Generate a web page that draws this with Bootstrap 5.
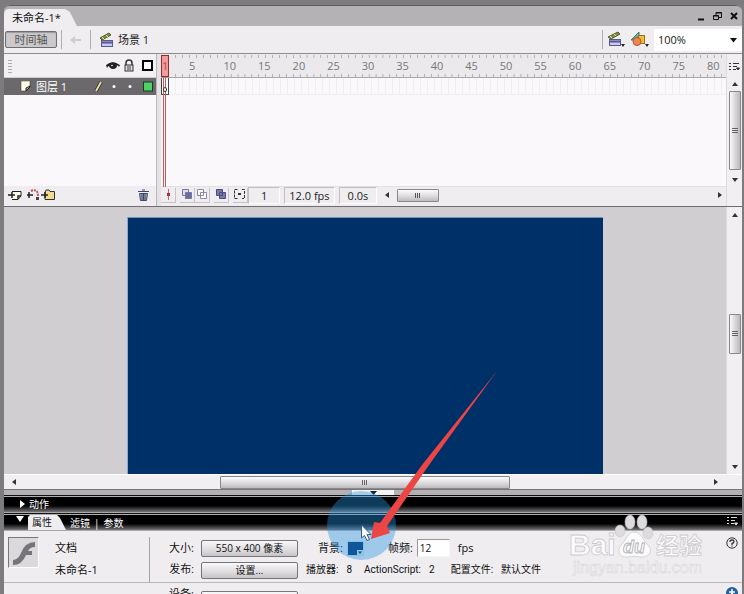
<!DOCTYPE html>
<html lang="zh-CN">
<head>
<meta charset="utf-8">
<meta name="viewport" content="width=device-width, initial-scale=1">
<title>未命名-1</title>
<link href="https://cdn.jsdelivr.net/npm/bootstrap@5.3.0/dist/css/bootstrap.min.css" rel="stylesheet">
<style>
  body { font: 11px/14px "Open Sans", "Noto Sans CJK SC", sans-serif; color: #222; background: #7d7b7e; }
  button, input, select { font: inherit; color: inherit; }
  svg { display: block; flex: none; }
  .shell { padding: 5px 2px 0 4px; }
  .doc { background: #efedf0; border-radius: 6px 6px 0 0; border-bottom: 1px solid #77757a; min-height: 0; }
  .titlebar { height: 21px; background: #b4b2b5; border-top: 1px solid #5f5d60; border-radius: 6px 6px 0 0; }
  .doc-tab { height: 17px; padding: 0 16px 0 8px; background: #efedf0; color: #111; border-radius: 5px 0 0 0; clip-path: polygon(0 0, calc(100% - 12px) 0, calc(100% - 7px) 3px, 100% 100%, 0 100%); }
  .plain { border: 0; padding: 0; background: none; }
  .toolbar { height: 28px; background: #efedf0; border-bottom: 1px solid #8e8c8f; padding-left: 1px; }
  .tl-toggle { width: 52px; height: 17px; border: 1px solid #6f6d70; border-radius: 2px; background: #cbc9cc; color: #555; line-height: 14px; box-shadow: inset 0 1px 1px #9a989b; }
  .vline { width: 1px; align-self: stretch; background: #b1afb2; }
  .zoom-box { width: 88px; height: 22px; border: 0; background: #fff; padding: 0 4px; font-size: 11px; appearance: none; }
  .zoom-wrap svg { position: absolute; right: 5px; top: 9px; pointer-events: none; }
  .timeline { height: 153px; background: #faf8fb; border-bottom: 1px solid #6f6d70; }
  .layers { width: 153px; }
  .layers-head { height: 24px; background: #f2f0f3; border-bottom: 1px solid #cfcdd0; }
  .grip { width: 4px; height: 14px; background: radial-gradient(#999 34%, transparent 40%) 0 0 / 2px 3px; }
  .layer-row { height: 17px; background: #6b696c; color: #fff; }
  .tl-foot { height: 20px; padding-bottom: 3px; background: #efedf0; }
  .frames { border-left: 4px solid #e4e2e5; box-shadow: -1px 0 #b9b7ba; }
  .ruler { height: 24px; background: #ebe9ec; border-bottom: 1px solid #aaa8ab; color: #777; font-size: 11px; line-height: 24px; }
  .ruler-start { width: 28px; }
  .ruler-end { width: 19px; }
  .ticks { background: linear-gradient(90deg, #b4b2b5 1px, transparent 1px) 0 1px / 20% 3px repeat-x, linear-gradient(90deg, #b4b2b5 1px, transparent 1px) 0 100% / 20% 3px repeat-x; }
  .ruler-start.ticks, .ruler-end.ticks { background-size: 7px 3px; }
  .cells { height: 17px; border-bottom: 1px solid #efedf0; background: repeating-linear-gradient(90deg, #f0eef1 0 1px, transparent 1px 7px); }
  .playhead { position: absolute; left: 0; top: 1px; width: 8px; height: 22px; background: #f49a98; border: 1px solid #8c2f30; color: #b05050; line-height: 20px; text-align: center; z-index: 2; }
  .playline { position: absolute; left: 2px; top: 23px; width: 3px; height: 110px; border: solid #c85a5c; border-width: 0 1px; z-index: 1; }
  .keyframe { width: 8px; height: 17px; border: 1px solid #444; border-top: 0; background: #fff; }
  .keyframe i { width: 4px; height: 5px; border: 1px solid #333; border-radius: 50%; margin: 9px 0 0 1px; background: #fff; z-index: 2; }
  .vscroll { width: 16px; background: #f1eff2; border-left: 1px solid #dddbde; }
  .vthumb { width: 12px; border: 1px solid #89878a; border-radius: 1px; background: linear-gradient(90deg, #fafafa, #d6d4d7 55%, #bcbabd); }
  .hthumb { border: 1px solid #89878a; border-radius: 1px; background: linear-gradient(#fbfbfb, #dddbde 55%, #bdbbbe); }
  .foot-btn { width: 15px; height: 15px; border: 0; border-right: 1px solid #c5c3c6; border-bottom: 1px solid #c5c3c6; padding: 0; background: none; }
  .readout { height: 17px; border: 1px solid; border-color: #c1bfc2 #fff #fff #c1bfc2; text-align: center; line-height: 16px; }
  .stage-area { min-height: 0; background: #d0ced1; }
  .canvas { margin: 10px 123px 0 123px; background: #003068; border-top: 1px solid #6f93b8; border-left: 1px solid #8aa9c8; }
  .hscroll { height: 15px; background: #f1eff2; border-top: 1px solid #fff; }
  .stage-thumb { margin-left: 204px; width: 290px; height: 13px; }
  .splitter { height: 5px; background: #b3b1b4; }
  .collapse-tab { width: 42px; height: 5px; background: #f4f4f5; }
  .bar { height: 18px; color: #fff; border-top: 1px solid #111; border-bottom: 1px solid #aaa8ab; background: linear-gradient(#b0aeb1 0 1px, #000 1px 60%, #29282a 75%, #77757a); }
  .bar a { color: inherit; text-decoration: none; }
  .prop-tabs { font-size: 10px; }
  .prop-tab { height: 15px; padding: 0 14px 0 4px; background: #efedf0; clip-path: polygon(0 2px, 2px 0, calc(100% - 9px) 0, calc(100% - 6px) 3px, 100% 100%, 0 100%); }
  .bar a.prop-tab { color: #111; }
  .props { height: 63px; background: #efedf0; color: #111; }
  .props-main { padding-top: 6px; }
  .flash-mark { width: 31px; height: 31px; border: 1px solid; border-color: #777 #fff #fff #777; background: #dbd9dc; }
  .doc-info { width: 146px; height: 45px; border-right: 1px solid #a5a3a6; padding-left: 4px; }
  .prop-row { height: 22px; }
  .compact { font-size: 10px; font-family: Roboto, "Noto Sans CJK SC", sans-serif; }
  .prop-key { width: 47px; padding-right: 3px; text-align: right; font-size: 11px; }
  .prop-btn { width: 97px; height: 17px; border: 1px solid #77757a; border-radius: 2px; padding: 0; line-height: 15px; background: linear-gradient(#f9f8fa, #dedcdf 60%, #c6c4c7); }
  .narrow { font-size: 10px; }
  .swatch { width: 17px; height: 15px; border: 1px solid #c9dced; padding: 0; background: #003068; }
  .fps-in { width: 33px; height: 18px; border: 1px solid; border-color: #999 #f6f6f6 #f6f6f6 #999; background: #fff; padding: 0 2px; font-size: 10px; }
  .props-more { border-top: 1px solid #bab8bb; height: 12px; }
  .overlay { position: absolute; pointer-events: none; z-index: 5; }
  .spot { left: 327px; top: 491px; width: 69px; height: 69px; border-radius: 50%; background: rgba(38, 148, 224, .4); }
  .pointer { left: 360px; top: 524px; }
  .arrow { left: 368px; top: 368px; }
  .watermark { left: 566px; top: 510px; }
  .w-url { font: 16px "Liberation Sans", sans-serif; fill: #f6f5f7; stroke: #d9d7da; stroke-width: .6px; }
  .w-big { font: bold 30px "Liberation Sans", sans-serif; }
  .w-du { font: italic bold 18px "Liberation Sans", sans-serif; }
  .w-cjk { font: bold 23px "Noto Sans CJK SC", sans-serif; }
</style>
<script src="https://cdn.jsdelivr.net/npm/bootstrap@5.3.0/dist/js/bootstrap.bundle.min.js"></script>
</head>
<body>
<div class="shell vh-100 overflow-hidden position-relative d-flex flex-column">
  <main class="doc d-flex flex-column flex-grow-1">
    <div class="titlebar d-flex justify-content-between">
      <div class="doc-tab align-self-end d-flex align-items-center">未命名-1*</div>
      <div class="d-flex align-items-center gap-2 pe-1">
        <button class="plain" aria-label="最小化"><svg width="8" height="10"><path d="M1 8.500h6" stroke="#111" stroke-width="2"/></svg></button>
        <button class="plain" aria-label="还原"><svg width="9" height="10" fill="none" stroke="#111"><path d="M3 4V1.500h5.500V6.500H6M3 2h5.500M.5 4.500h5v4h-5zM.5 5h5"/></svg></button>
        <button class="plain" aria-label="关闭"><svg width="8" height="10"><path d="M1 2l6 6M7 2L1 8" stroke="#111" stroke-width="2"/></svg></button>
      </div>
    </div>

    <div class="toolbar d-flex align-items-center">
      <button class="tl-toggle p-0">时间轴</button>
      <div class="vline my-1 ms-1"></div>
      <button class="plain px-1 ms-1 me-1" aria-label="后退"><svg width="12" height="10"><path d="M0 5l5-4v3h6v2H5v3z" fill="#cfcdd0"/></svg></button>
      <div class="vline my-1"></div>
      <svg class="ms-2 me-1" width="15" height="16"><path d="M1 6L10 1l2 2-9 5z" fill="#87923e" stroke="#4e5824"/><path d="M3 5l2 2M7 3l2 2" stroke="#e3e9a3"/><rect x="2.500" y="8.500" width="11" height="6" fill="#c8c8ec" stroke="#585894"/><path d="M3 10.500h10" stroke="#55558c" stroke-width="2"/></svg>
      <span>场景 1</span>
      <div class="vline my-1 ms-auto me-1"></div>
      <button class="plain" aria-label="编辑场景"><svg width="19" height="17"><path d="M1 6L11 1l2 2-9 5z" fill="#87923e" stroke="#4e5824"/><path d="M3 5l2 2M7 3l2 2" stroke="#e3e9a3"/><rect x="2.500" y="8.500" width="11" height="6" fill="#c8c8ec" stroke="#585894"/><path d="M3 10.500h10" stroke="#55558c" stroke-width="2"/><path d="M14 13h4l-2 3z" fill="#222"/></svg></button>
      <button class="plain ms-1 me-1" aria-label="编辑元件"><svg width="20" height="17"><path d="M1 9l8-8v8z" fill="#65b69c" stroke="#327b66"/><rect x="8.500" y="4.500" width="6" height="8" fill="#efc033" stroke="#9b6f16"/><circle cx="7" cy="10.500" r="4" fill="#ed8750" stroke="#b45327"/><path d="M15 13h4l-2 3z" fill="#222"/></svg></button>
      <div class="zoom-wrap position-relative">
        <select class="zoom-box" aria-label="缩放"><option>100%</option></select>
        <svg width="7" height="5"><path d="M0 0h7L3.500 4.500z" fill="#111"/></svg>
      </div>
    </div>

    <section class="timeline d-flex">
      <div class="layers d-flex flex-column">
        <div class="layers-head d-flex align-items-center pe-1">
          <div class="grip ms-1 me-auto"></div>
          <svg width="14" height="12"><path d="M0 5Q6 0 14 5L13 7Q12 5 11 5Q11 9 7 9Q4 9 3 6Q2 6 1 8z" fill="#222"/><path d="M2 5Q7 1 12 5" fill="none" stroke="#222" stroke-width="1.500"/><circle cx="6" cy="5.500" r=".8" fill="#fff"/></svg>
          <svg class="ms-1 me-1" width="10" height="13"><path d="M2 6V4q0-3 3-3t3 3v2" fill="none" stroke="#333" stroke-width="1.500"/><rect x="1" y="6" width="8" height="6" fill="#ddd" stroke="#333"/><path d="M3 8h4M3 10h4" stroke="#444"/></svg>
          <svg class="ms-1" width="11" height="11"><rect x="1" y="1" width="9" height="9" fill="#fff" stroke="#000" stroke-width="2"/></svg>
        </div>
        <div class="layer-row d-flex align-items-center pe-1">
          <svg class="ms-3 me-1" width="12" height="11"><path d="M1 0h9v6L6 10H1z" fill="#fdfbe8" stroke="#333" stroke-width=".5"/><path d="M10 5v1L6 10V7z" fill="#aeb078" stroke="#222"/></svg>
          <span class="me-auto">图层 1</span>
          <svg width="9" height="12"><path d="M7 1L2 10" stroke="#222" stroke-width="3.500"/><path d="M7 1L2 10" stroke="#e8dba2" stroke-width="2"/></svg>
          <svg class="ms-1" width="36" height="11"><circle cx="7" cy="5.500" r="1.500" fill="#fff"/><circle cx="23" cy="5.500" r="1.500" fill="#fff"/></svg>
          <svg width="10" height="11"><rect x=".5" y="1" width="9" height="9" fill="#50d069" stroke="#173c1d"/></svg>
        </div>
        <div class="tl-foot d-flex align-items-center mt-auto ps-1 pe-2">
          <button class="plain" aria-label="插入图层"><svg width="15" height="12"><path d="M4 2.500h9V7l-3 3.500H4" fill="#fffef0" stroke="#222"/><path d="M0 6h7M4 3v6M13 7h-3v3" stroke="#222" fill="none" stroke-width="1.500"/></svg></button>
          <button class="plain ms-1" aria-label="添加引导层"><svg width="14" height="12"><path d="M2 3v6M0 6h6" stroke="#222" stroke-width="1.500"/><path d="M4 2q7-3 7 5" fill="none" stroke="#b55463" stroke-dasharray="2 1" stroke-width="2"/><rect x="9" y="8" width="3" height="3" fill="#444"/></svg></button>
          <button class="plain" aria-label="插入文件夹"><svg width="15" height="12"><path d="M4 3.500V10.500h9.500V2.500H9L8 1H5z" fill="#f0dc8c" stroke="#333"/><path d="M0 6h7M4 3v6" stroke="#222" stroke-width="1.500"/></svg></button>
          <button class="plain ms-auto" aria-label="删除图层"><svg width="11" height="12" stroke="#3e4965"><path d="M0 2.500h11M4 1h3" fill="none"/><path d="M1.500 4.500h8l-1 7h-6z" fill="#a4adc9"/><path d="M4 5v6M5.500 5v6M7 5v6"/></svg></button>
        </div>
      </div>

      <div class="frames position-relative flex-grow-1 d-flex flex-column">
        <div class="ruler d-flex">
          <div class="ruler-start ticks"></div>
          <div class="ticks col">5</div><div class="ticks col">10</div><div class="ticks col">15</div><div class="ticks col">20</div><div class="ticks col">25</div>
          <div class="ticks col">30</div><div class="ticks col">35</div><div class="ticks col">40</div><div class="ticks col">45</div><div class="ticks col">50</div>
          <div class="ticks col">55</div><div class="ticks col">60</div><div class="ticks col">65</div><div class="ticks col">70</div><div class="ticks col">75</div>
          <div class="ruler-end ticks">80</div>
        </div>
        <div class="playhead">1</div>
        <div class="playline"></div>
        <div class="cells"><div class="keyframe d-flex"><i></i></div></div>
        <div class="tl-foot d-flex align-items-center mt-auto border-top">
          <button class="foot-btn me-1" aria-label="滚动到播放头"><svg width="14" height="13"><path d="M7.500 1v11" stroke="#d06565"/><path d="M6 5h3v3H6z" fill="#a33"/></svg></button>
          <button class="foot-btn" aria-label="绘图纸外观"><svg width="14" height="13" stroke="#77789b"><path d="M2.500 1.500h6v6h-6z" fill="#ddddea"/><path d="M5.500 4.500h6v6h-6z" fill="#6b6da0"/></svg></button>
          <button class="foot-btn" aria-label="绘图纸外观轮廓"><svg width="14" height="13" fill="#fff" stroke="#8a8aa5"><path d="M2.500 1.500h6v6h-6zM5.500 4.500h6v6h-6z"/></svg></button>
          <button class="foot-btn ms-1" aria-label="编辑多个帧"><svg width="14" height="13" stroke="#4b4d7a" fill="#7779aa"><path d="M2.500 1.500h6v6h-6zM5.500 4.500h6v6h-6z"/></svg></button>
          <button class="foot-btn ms-1" aria-label="修改绘图纸标记"><svg width="14" height="13" fill="none" stroke="#333"><path d="M4.500 1.500h-3v9h3M9 1.500h2.500v9H9" stroke-dasharray="3 1"/><path d="M5 6h3" stroke-width="2"/></svg></button>
          <div class="readout col-auto px-2"><span class="px-1">1</span></div>
          <div class="readout ms-1 px-1">12.0 fps</div>
          <div class="readout ms-1 px-2">0.0s</div>
          <div class="d-flex align-items-center flex-grow-1 ms-2 pe-1">
            <svg width="4" height="6"><path d="M4 0v6L0 3z" fill="#333"/></svg>
            <div class="hthumb d-flex align-items-center justify-content-center ms-2 px-3"><svg width="8" height="11"><path d="M1.500 3v5M3.500 3v5M5.500 3v5" stroke="#555"/></svg></div>
            <svg class="ms-auto" width="4" height="6"><path d="M0 0v6l4-3z" fill="#333"/></svg>
          </div>
        </div>
      </div>

      <div class="vscroll d-flex flex-column align-items-center">
        <button class="plain mt-1 pt-1" aria-label="帧视图"><svg width="11" height="10" stroke="#333"><path d="M0 1.500h2M4 1.500h6M0 4.500h2M4 4.500h4M0 7.500h2M4 7.500h3"/><path d="M7.500 6h3L9 8z" fill="#222"/></svg></button>
        <svg class="mt-2 mb-1" width="6" height="7"><path d="M0 6h6L3 2z" fill="#333"/></svg>
        <div class="vthumb flex-grow-1 d-flex align-items-center"><svg width="10" height="8"><path d="M2 1.500h6M2 3.500h6M2 5.500h6" stroke="#666"/></svg></div>
        <svg class="mt-2 mb-4" width="6" height="4"><path d="M0 0h6L3 4z" fill="#333"/></svg>
      </div>
    </section>

    <section class="stage-area d-flex flex-grow-1">
      <div class="canvas flex-grow-1"></div>
      <div class="vscroll d-flex flex-column align-items-center">
        <svg class="mt-1" width="6" height="8"><path d="M0 6h6L3 2z" fill="#333"/></svg>
        <div class="d-flex align-items-center flex-grow-1 pb-3">
          <div class="vthumb py-3"><svg width="10" height="6"><path d="M2 .5h6M2 2.500h6M2 4.500h6" stroke="#666"/></svg></div>
        </div>
        <svg class="mb-1" width="6" height="6"><path d="M0 1h6L3 5z" fill="#333"/></svg>
      </div>
    </section>
    <div class="hscroll d-flex align-items-center ps-2 pe-4">
      <svg width="4" height="6"><path d="M4 0v6L0 3z" fill="#333"/></svg>
      <div class="hthumb stage-thumb d-flex align-items-center justify-content-center"><svg width="8" height="9"><path d="M1.500 2v5M3.500 2v5M5.500 2v5" stroke="#666"/></svg></div>
      <svg class="ms-auto" width="4" height="6"><path d="M0 0v6l4-3z" fill="#333"/></svg>
    </div>
  </main>

  <div class="splitter d-flex justify-content-center"><div class="collapse-tab d-flex justify-content-center"><svg width="7" height="5"><path d="M0 1h7L3.500 5z" fill="#123"/></svg></div></div>
  <div class="bar prop-tabs d-flex align-items-center ps-3">
    <svg width="5" height="8"><path d="M0 0v8l5-4z" fill="#fff"/></svg><a class="ms-1" href="#">动作</a>
  </div>
  <nav class="bar prop-tabs d-flex align-items-end ps-2 pe-1">
    <svg class="ms-1 me-1 mb-2" width="8" height="6"><path d="M0 0h8L4 6z" fill="#fff"/></svg>
    <a class="prop-tab" href="#">属性</a>
    <a class="ms-1" href="#">滤镜</a><span class="px-1">|</span><a href="#">参数</a>
    <button class="plain ms-auto mb-1" aria-label="面板菜单"><svg width="11" height="10" stroke="#ddd"><path d="M0 1.500h2M4 1.500h6M0 4.500h2M4 4.500h4M0 7.500h2M4 7.500h3"/><path d="M7.500 7h3L9 9z" fill="#ddd"/></svg></button>
  </nav>

  <section class="props d-flex flex-column flex-shrink-0 overflow-hidden">
    <div class="props-main d-flex">
      <div class="doc-info d-flex">
        <div class="flash-mark"><svg width="29" height="29"><path d="M26 4v5q-5 0-7 4h4v4h-6q-4 10-13 10v-5q5 0 8-7Q16 4 26 4z" fill="#777579"/></svg></div>
        <div class="ps-3"><div class="prop-row d-flex align-items-center">文档</div><div class="prop-row d-flex align-items-center">未命名-1</div></div>
      </div>
      <div class="flex-grow-1">
        <div class="prop-row d-flex align-items-center">
          <span class="prop-key">大小:</span><button class="prop-btn narrow ms-1 me-3">550 x 400 像素</button>
          <label class="ms-1" for="bg">背景:</label>
          <button id="bg" class="swatch ms-1" aria-label="背景"><svg width="15" height="13"><path d="M9 8h6v5H9z" fill="#d5e5f2"/><path d="M10 9.500h4l-2 2.500z" fill="#123"/></svg></button>
          <label class="ms-4" for="fps">帧频:</label><input id="fps" class="fps-in ms-1" value="12"><span class="ms-2">fps</span>
          <button class="plain ms-auto me-1 align-self-start" aria-label="帮助"><svg width="12" height="12" fill="none" stroke="#333"><circle cx="6" cy="6" r="5.200"/><path d="M4 5q0-2 2-2t2 1.500Q8 6 6 6.500V8M6 8.500v1" stroke-width="1.300"/></svg></button>
        </div>
        <div class="prop-row compact d-flex align-items-center">
          <span class="prop-key">发布:</span><button class="prop-btn ms-1 me-2">设置...</button>
          <span>播放器:</span><span class="ms-2">8</span><span class="ms-2 ps-1">ActionScript:</span><span class="ms-2">2</span><span class="ms-3">配置文件:</span><span class="ms-2">默认文件</span>
        </div>
      </div>
    </div>
    <div class="props-more d-flex">
      <div class="doc-info border-0"></div>
      <span class="prop-key mt-1">设备:</span><button class="prop-btn mt-2 ms-1">设置...</button>
      <svg class="ms-auto me-1 mt-1" width="12" height="12"><circle cx="6" cy="6" r="6" fill="#235f9d"/><path d="M6 2v7M3 5h6M4 9l2-3 2 3" stroke="#fff" stroke-width="1.500"/></svg>
    </div>
  </section>

  <svg class="overlay watermark" width="144" height="70">
    <g fill="#dddbde" stroke="#c6c4c7" stroke-width=".6"><ellipse cx="64" cy="12" rx="5" ry="7"/><ellipse cx="76" cy="12" rx="5" ry="7"/><ellipse cx="54" cy="21" rx="5" ry="6"/><ellipse cx="82" cy="23" rx="5" ry="6"/></g>
    <g fill="#fbfafc" stroke="#cccacd" stroke-width=".8"><path d="M68 22c7 0 9 8 14 13 6 7 0 13-8 12-5-1-7-1-12 0-8 1-12-5-7-12 6-5 6-13 13-13z"/><text class="w-big" x="3" y="45">Bai</text><text class="w-cjk" x="90" y="44">经验</text><text class="w-du" x="57" y="43" stroke="#aeacaf">du</text></g>
    <text class="w-url" x="7" y="63">jingyan.baidu.com</text>
  </svg>
  <div class="overlay spot"></div>
  <svg class="overlay pointer" width="14" height="19"><path d="M1.500 1v13l3-2.500 2.500 5 2.500-1-2.500-5h4z" fill="#f8fbff" stroke="#3b5f7d"/></svg>
  <svg class="overlay arrow" width="134" height="176"><path d="M129 3L61 97 19 158l3 7-19 6 3-17 6 1 42-58z" fill="#ed4543"/></svg>
</div>
</body>
</html>
